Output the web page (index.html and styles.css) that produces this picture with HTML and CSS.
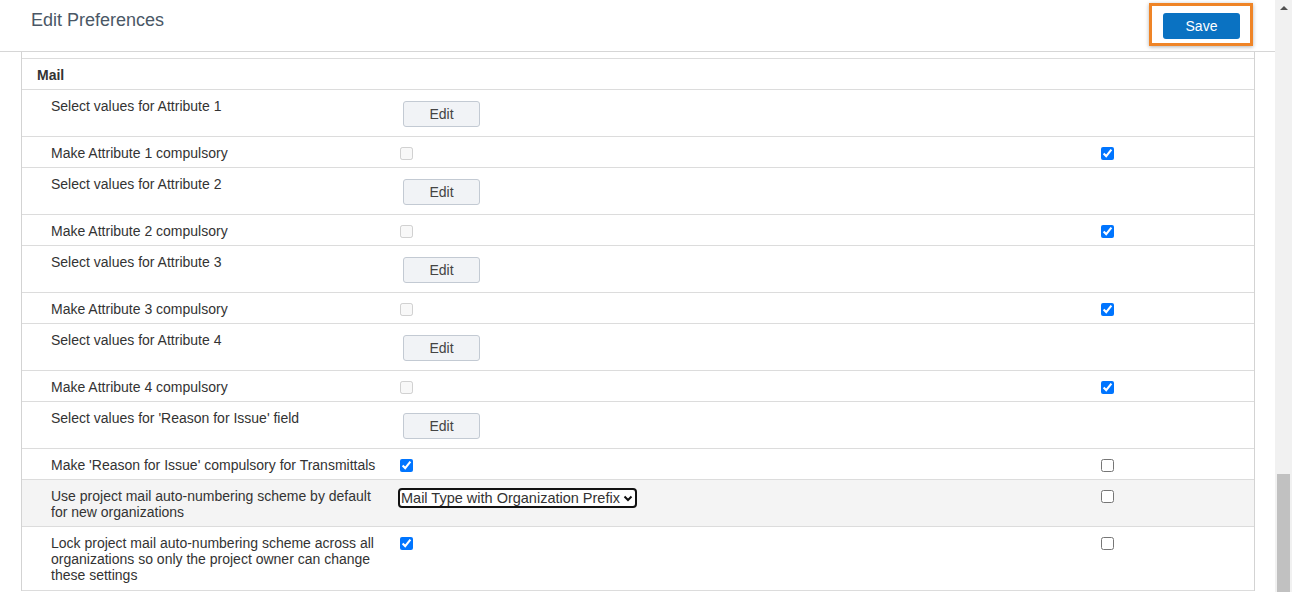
FILE: index.html
```html
<!DOCTYPE html>
<html lang="en">
<head>
<meta charset="UTF-8">
<meta name="viewport" content="width=device-width, initial-scale=1.0">
<title>Edit Preferences</title>
<link rel="stylesheet" href="styles.css">
</head>
<body>

<div class="page">
  <div class="main">
    <div class="header">
      <h1 class="title">Edit Preferences</h1>
      <div class="highlight">
        <button class="save">Save</button>
      </div>
    </div>

    <div class="prefs">
      <div class="row section">Mail</div>

      <div class="row">
        <div class="label">Select values for Attribute 1</div>
        <div class="value"><button class="edit">Edit</button></div>
        <div class="flag"></div>
      </div>
      <div class="row">
        <div class="label">Make Attribute 1 compulsory</div>
        <div class="value"><input type="checkbox" disabled></div>
        <div class="flag"><input type="checkbox" checked></div>
      </div>

      <div class="row">
        <div class="label">Select values for Attribute 2</div>
        <div class="value"><button class="edit">Edit</button></div>
        <div class="flag"></div>
      </div>
      <div class="row">
        <div class="label">Make Attribute 2 compulsory</div>
        <div class="value"><input type="checkbox" disabled></div>
        <div class="flag"><input type="checkbox" checked></div>
      </div>

      <div class="row">
        <div class="label">Select values for Attribute 3</div>
        <div class="value"><button class="edit">Edit</button></div>
        <div class="flag"></div>
      </div>
      <div class="row">
        <div class="label">Make Attribute 3 compulsory</div>
        <div class="value"><input type="checkbox" disabled></div>
        <div class="flag"><input type="checkbox" checked></div>
      </div>

      <div class="row">
        <div class="label">Select values for Attribute 4</div>
        <div class="value"><button class="edit">Edit</button></div>
        <div class="flag"></div>
      </div>
      <div class="row">
        <div class="label">Make Attribute 4 compulsory</div>
        <div class="value"><input type="checkbox" disabled></div>
        <div class="flag"><input type="checkbox" checked></div>
      </div>

      <div class="row">
        <div class="label">Select values for 'Reason for Issue' field</div>
        <div class="value"><button class="edit">Edit</button></div>
        <div class="flag"></div>
      </div>
      <div class="row">
        <div class="label">Make 'Reason for Issue' compulsory for Transmittals</div>
        <div class="value"><input type="checkbox" checked></div>
        <div class="flag"><input type="checkbox"></div>
      </div>

      <div class="row shaded">
        <div class="label">Use project mail auto-numbering scheme by default for new organizations</div>
        <div class="value">
          <div class="select-wrap">
            <select class="scheme">
              <option>Mail Type with Organization Prefix</option>
              <option>Mail Type</option>
            </select>
            <svg class="chevron" width="10" height="7" viewBox="0 0 10 7">
              <path d="M1.5 1.5 L5 5 L8.5 1.5" fill="none" stroke="#111" stroke-width="2"/>
            </svg>
          </div>
        </div>
        <div class="flag"><input type="checkbox"></div>
      </div>
      <div class="row last">
        <div class="label">Lock project mail auto-numbering scheme across all organizations so only the project owner can change these settings</div>
        <div class="value"><input type="checkbox" checked></div>
        <div class="flag"><input type="checkbox"></div>
      </div>
    </div>
  </div>

  <div class="scrollbar">
    <span class="arrow"></span>
    <div class="track"></div>
    <div class="thumb"></div>
  </div>
</div>

</body>
</html>
```

FILE: styles.css
```css
* {
  box-sizing: border-box;
}
body {
  font-family: Arial, "Liberation Sans", sans-serif;
  font-size: 14px;
  color: #333;
  margin: 0;
  padding: 0;
  height: 592px;
  overflow: hidden;
}
.page {
  display: flex;
  height: 592px;
}
.main {
  flex: 1;
  overflow: hidden;
}
.header {
  display: flex;
  justify-content: space-between;
  align-items: flex-start;
  height: 52px;
  padding: 0 22px 0 31px;
  border-bottom: 1px solid #d6d6d6;
}
.title {
  margin: 0;
  padding-top: 10px;
  font-size: 18px;
  line-height: 20px;
  font-weight: normal;
  color: #4a5766;
}
.highlight {
  margin-top: 3px;
  padding: 7px 10px 4px 11px;
  border: 3px solid #ef8426;
  box-shadow: 0 1px 4px rgba(0, 0, 0, 0.3);
}
.save {
  display: block;
  width: 77px;
  height: 26px;
  border: none;
  border-radius: 3px;
  background-color: #0a72c2;
  color: #fff;
  font-family: Arial, "Liberation Sans", sans-serif;
  font-size: 14px;
  padding: 0;
}
.prefs {
  margin: 0 20px 0 21px;
  padding-top: 6px;
  border-left: 1px solid #d3d3d3;
  border-right: 1px solid #d3d3d3;
}
.row {
  display: grid;
  grid-template-columns: 347px 700px 1fr;
  padding: 8px 0 6px 29px;
  line-height: 16px;
  border-top: 1px solid #dcdcdc;
}
.row.last {
  padding-bottom: 7px;
  border-bottom: 1px solid #dcdcdc;
}
.row.section {
  display: block;
  padding-left: 15px;
  font-weight: bold;
}
.row.shaded {
  background-color: #f4f4f4;
}
.label {
  padding-right: 14px;
}
.value input[type="checkbox"] {
  margin: 2px 0 0 2px;
}
.flag input[type="checkbox"] {
  margin: 2px 0 0 3px;
}
input[type="checkbox"] {
  display: block;
  width: 13px;
  height: 13px;
}
.edit {
  display: block;
  margin: 3px 0 3px 5px;
  width: 77px;
  height: 26px;
  padding: 0;
  background-color: #f1f3f6;
  border: 1px solid #c3cad3;
  border-radius: 3px;
  color: #444;
  font-family: Arial, "Liberation Sans", sans-serif;
  font-size: 14px;
}
.select-wrap {
  position: relative;
  width: 239px;
}
.scheme {
  display: block;
  appearance: none;
  -webkit-appearance: none;
  height: 20px;
  width: 239px;
  padding: 0 0 0 1px;
  border: 2px solid #111;
  border-radius: 4px;
  background-color: #fff;
  color: #333;
  font-family: Arial, "Liberation Sans", sans-serif;
  font-size: 14.5px;
  line-height: 16px;
}
.chevron {
  position: absolute;
  right: 4px;
  top: 7px;
}
.scrollbar {
  position: relative;
  width: 17px;
  background-color: #f1f1f1;
  display: flex;
  flex-direction: column;
  align-items: center;
}
.arrow {
  margin-top: 6px;
  width: 0;
  height: 0;
  border-left: 4px solid transparent;
  border-right: 4px solid transparent;
  border-bottom: 4px solid #505050;
}
.track {
  flex: 1;
}
.thumb {
  width: 13px;
  height: 118px;
  background-color: #c1c1c1;
}
```
